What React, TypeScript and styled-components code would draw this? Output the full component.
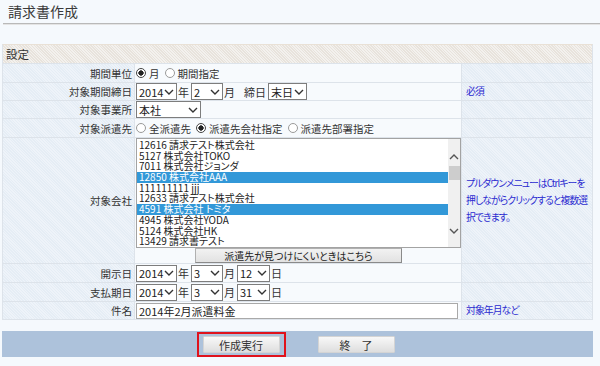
import React from 'react';
import styled, { createGlobalStyle } from 'styled-components';

const GlobalStyle = createGlobalStyle`
  body {
    margin: 0;
    background: #f5f9fd;
    font-family: "Noto Sans CJK JP", "Noto Sans", sans-serif;
    font-feature-settings: "palt";
    color: #333;
  }
`;

const hatchBlue = `repeating-linear-gradient(45deg, #e5edf5 0 1px, #eef3f9 1px 2px)`;
const hatchBeige = `repeating-linear-gradient(45deg, #e8e3dc 0 1px, #f3f1ee 1px 2px)`;

const Page = styled.div`
  width: 600px;
  height: 366px;
  overflow: hidden;
`;

const TitleBar = styled.div`
  margin-left: 3px;
  height: 24px;
  padding-left: 5px;
  box-sizing: border-box;
  border-bottom: 1px solid #b9b9b9;
  box-shadow: 0 1px 0 #e4e4e4;
  font-size: 14px;
  line-height: 23px;
  color: #3a3a3a;
`;

const Section = styled.div`
  margin: 20px 0 0 2px;
  width: 591px;
  box-sizing: border-box;
  border: 1px solid #dde3ea;
  border-top-color: #e9e1d6;
  overflow: hidden;
`;

const SectionHeader = styled.div`
  height: 18px;
  line-height: 18px;
  padding-left: 3px;
  font-size: 11.5px;
  color: #333;
  background: ${hatchBeige};
`;

const Row = styled.div<{ $h: number }>`
  display: grid;
  grid-template-columns: 132px 327px minmax(0, 1fr);
  height: ${({ $h }) => $h}px;
  border-top: 1px solid #dde3ea;
`;

const Label = styled.div`
  display: flex;
  align-items: center;
  justify-content: flex-end;
  padding-right: 2px;
  font-size: 10.5px;
  color: #333;
  background: ${hatchBlue};
  border-right: 1px solid #dde3ea;
`;

const Field = styled.div<{ $col?: boolean }>`
  display: flex;
  flex-direction: ${({ $col }) => ($col ? 'column' : 'row')};
  align-items: center;
  padding-left: 1px;
  font-size: 11px;
  background: #f7fafd;
  border-right: 1px solid #dde3ea;
`;

const Note = styled.div`
  display: flex;
  align-items: center;
  padding-left: 4px;
  font-size: 9.8px;
  line-height: 17px;
  letter-spacing: -0.9px;
  white-space: nowrap;
  color: #2a2ad0;
  background: ${hatchBlue};
`;

const SelectBox = styled.div<{ $w: number }>`
  display: inline-flex;
  align-items: center;
  justify-content: space-between;
  flex-shrink: 0;
  width: ${({ $w }) => $w}px;
  height: 17px;
  box-sizing: border-box;
  border: 1px solid #7d7d7d;
  background: #fff;
  padding: 0 2px;
  font-size: 11px;
  white-space: nowrap;
  color: #222;
`;

const Unit = styled.span<{ $gap?: number }>`
  margin: 0 ${({ $gap }) => $gap ?? 2}px 0 1px;
  font-size: 11px;
  white-space: nowrap;
  color: #333;
`;

const RadioLabel = styled.label`
  display: inline-flex;
  align-items: center;
  gap: 3px;
  margin-right: 5px;
  font-size: 10.5px;
  white-space: nowrap;
  color: #333;
`;

const RadioDot = styled.span<{ $on?: boolean }>`
  display: inline-block;
  width: 10px;
  height: 10px;
  box-sizing: border-box;
  border-radius: 50%;
  border: 1px solid ${({ $on }) => ($on ? '#444' : '#9a9a9a')};
  background: ${({ $on }) =>
    $on ? 'radial-gradient(circle, #222 0 2.4px, #fff 2.9px)' : '#fff'};
`;

const ListWrap = styled.div`
  display: flex;
  width: 325px;
  height: 110px;
  box-sizing: border-box;
  border: 1px solid #a3a3a3;
  background: #fff;
`;

const ListItems = styled.div`
  flex: 1;
  padding-top: 1px;
`;

const ListItem = styled.div<{ $sel?: boolean }>`
  height: 10.7px;
  line-height: 10.7px;
  padding-left: 2px;
  font-size: 10px;
  white-space: nowrap;
  color: ${({ $sel }) => ($sel ? '#fff' : '#222')};
  background: ${({ $sel }) => ($sel ? '#3298d8' : 'transparent')};
`;

const ScrollBar = styled.div`
  width: 12px;
  background: #f0f0f0;
  display: flex;
  flex-direction: column;
  align-items: center;
`;

const Thumb = styled.div`
  width: 11px;
  height: 14px;
  background: #cdcdcd;
  margin-top: 3px;
`;

const Spacer = styled.div`
  flex: 1;
`;

const SmallButton = styled.button`
  width: 207px;
  height: 15px;
  padding: 0;
  font-family: inherit;
  font-feature-settings: "palt";
  font-size: 10px;
  line-height: 12px;
  color: #222;
  background: linear-gradient(#f2f2f2, #e2e2e2);
  border: 1px solid #8a8a8a;
  border-top-color: #b0b0b0;
  border-left-color: #b0b0b0;
`;

const TextInput = styled.div`
  width: 322px;
  height: 16px;
  box-sizing: border-box;
  border: 1px solid #a9a9a9;
  background: #fff;
  padding-left: 2px;
  font-size: 11px;
  line-height: 14px;
  color: #222;
`;

const BottomBar = styled.div`
  margin: 11px 0 0 2px;
  width: 591px;
  height: 26px;
  background: #adc2db;
  display: flex;
  align-items: center;
  justify-content: center;
  gap: 32px;
`;

const Focus = styled.div`
  border: 2px solid #e0121c;
  padding: 2px 4px;
  display: flex;
  margin-left: -4px;
`;

const ActionButton = styled.button`
  width: 77px;
  height: 17px;
  padding: 0;
  font-family: inherit;
  font-size: 11px;
  color: #333;
  background: linear-gradient(#f8f8f8, #dedede);
  border: 1px solid #d4d4d4;
  border-radius: 1px;
`;

const Chevron = () => (
  <svg width="10" height="6" viewBox="0 0 10 6">
    <polyline points="1,1 5,5 9,1" fill="none" stroke="#333" strokeWidth="1.4" />
  </svg>
);

const Select = ({ w, value }: { w: number; value: string }) => (
  <SelectBox $w={w}>
    <span>{value}</span>
    <Chevron />
  </SelectBox>
);

const companies = [
  { name: '12616 請求テスト株式会社' },
  { name: '5127 株式会社TOKO' },
  { name: '7011 株式会社ジョンダ' },
  { name: '12850 株式会社AAA', sel: true },
  { name: '111111111 jjj' },
  { name: '12633 請求テスト株式会社' },
  { name: '4591 株式会社 トミタ', sel: true },
  { name: '4945 株式会社YODA' },
  { name: '5124 株式会社HK' },
  { name: '13429 請求書テスト' },
];

const DateFields = ({ y, m, d }: { y: string; m: string; d: string }) => (
  <>
    <Select w={41} value={y} />
    <Unit>年</Unit>
    <Select w={32} value={m} />
    <Unit>月</Unit>
    <Select w={33} value={d} />
    <Unit>日</Unit>
  </>
);

export default function App() {
  return (
    <Page>
      <GlobalStyle />
      <TitleBar>請求書作成</TitleBar>
      <Section>
        <SectionHeader>設定</SectionHeader>
        <Row $h={18}>
          <Label>期間単位</Label>
          <Field>
            <RadioLabel>
              <RadioDot $on />月
            </RadioLabel>
            <RadioLabel>
              <RadioDot />期間指定
            </RadioLabel>
          </Field>
          <Note />
        </Row>
        <Row $h={17}>
          <Label>対象期間締日</Label>
          <Field>
            <Select w={41} value="2014" />
            <Unit>年</Unit>
            <Select w={32} value="2" />
            <Unit $gap={8}>月</Unit>
            <Unit $gap={2}>締日</Unit>
            <Select w={39} value="末日" />
          </Field>
          <Note>必須</Note>
        </Row>
        <Row $h={17}>
          <Label>対象事業所</Label>
          <Field>
            <Select w={65} value="本社" />
          </Field>
          <Note />
        </Row>
        <Row $h={18}>
          <Label>対象派遣先</Label>
          <Field>
            <RadioLabel>
              <RadioDot />全派遣先
            </RadioLabel>
            <RadioLabel>
              <RadioDot $on />派遣先会社指定
            </RadioLabel>
            <RadioLabel>
              <RadioDot />派遣先部署指定
            </RadioLabel>
          </Field>
          <Note />
        </Row>
        <Row $h={125}>
          <Label>対象会社</Label>
          <Field $col>
            <ListWrap>
              <ListItems>
                {companies.map((c) => (
                  <ListItem key={c.name} $sel={c.sel}>
                    {c.name}
                  </ListItem>
                ))}
              </ListItems>
              <ScrollBar>
                <svg width="10" height="24" viewBox="0 0 10 24">
                  <polyline points="1,20 5,16 9,20" fill="none" stroke="#555" strokeWidth="1.4" />
                </svg>
                <Thumb />
                <Spacer />
                <svg width="10" height="20" viewBox="0 0 10 20">
                  <polyline points="1,2 5,6 9,2" fill="none" stroke="#555" strokeWidth="1.4" />
                </svg>
              </ScrollBar>
            </ListWrap>
            <SmallButton>派遣先が見つけにくいときはこちら</SmallButton>
          </Field>
          <Note>
            <div>
              プルダウンメニューはCtrlキーを
              <br />
              押しながらクリックすると複数選
              <br />
              択できます。
            </div>
          </Note>
        </Row>
        <Row $h={18}>
          <Label>開示日</Label>
          <Field>
            <DateFields y="2014" m="3" d="12" />
          </Field>
          <Note />
        </Row>
        <Row $h={18}>
          <Label>支払期日</Label>
          <Field>
            <DateFields y="2014" m="3" d="31" />
          </Field>
          <Note />
        </Row>
        <Row $h={17}>
          <Label>件名</Label>
          <Field>
            <TextInput>2014年2月派遣料金</TextInput>
          </Field>
          <Note>対象年月など</Note>
        </Row>
      </Section>
      <BottomBar>
        <Focus>
          <ActionButton>作成実行</ActionButton>
        </Focus>
        <ActionButton>終　了</ActionButton>
      </BottomBar>
    </Page>
  );
}
